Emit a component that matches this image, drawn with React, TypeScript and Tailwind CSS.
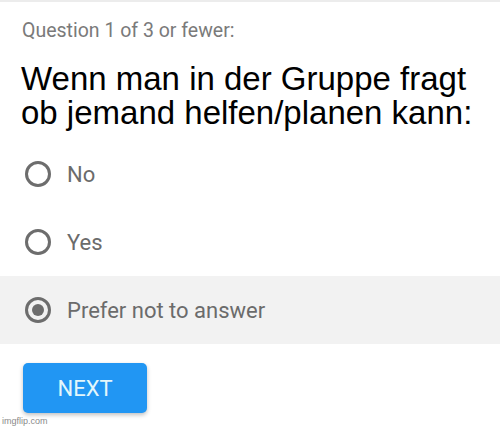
import React from "react";

function Radio({ checked }: { checked?: boolean }) {
  return (
    <span className="flex h-[26px] w-[26px] shrink-0 items-center justify-center rounded-full border-[3px] border-[#6d6d6d]">
      {checked && <span className="h-[12px] w-[12px] rounded-full bg-[#6d6d6d]" />}
    </span>
  );
}

export default function App() {
  const options = [
    { label: "No", checked: false },
    { label: "Yes", checked: false },
    { label: "Prefer not to answer", checked: true },
  ];
  return (
    <div className="relative h-[430px] w-[500px] overflow-hidden border-t-2 border-[#ececec] bg-white">
      <p className="pl-[22px] pt-[17px] font-['Roboto',sans-serif] text-[19.5px] leading-[24px] text-[#7a7a7a]">
        Question 1 of 3 or fewer:
      </p>
      <h1 className="mt-[19px] pl-[21px] font-['Liberation_Sans',Arial,sans-serif] text-[33px] leading-[34px] text-black">
        Wenn man in der Gruppe fragt
        <br />
        ob jemand helfen/planen kann:
      </h1>
      <div className="mt-[10px] flex flex-col">
        {options.map((o) => (
          <div
            key={o.label}
            className={`flex h-[68px] items-center gap-[16px] pl-[25px] ${o.checked ? "bg-[#f2f2f2]" : ""}`}
          >
            <Radio checked={o.checked} />
            <span className="font-['Roboto',sans-serif] text-[22px] text-[#6b6b6b]">{o.label}</span>
          </div>
        ))}
      </div>
      <button className="ml-[23px] mt-[19px] flex h-[50px] w-[124px] items-center justify-center rounded-[5px] bg-[#2196f3] font-['Roboto',sans-serif] text-[22px] text-[#e3f6fb] shadow-[0_2px_4px_rgba(0,0,0,0.25)]">
        NEXT
      </button>
      <span className="absolute bottom-[2px] left-[2px] font-['Liberation_Sans',Arial,sans-serif] text-[9px] text-[#8a8a8a]">
        imgflip.com
      </span>
    </div>
  );
}
